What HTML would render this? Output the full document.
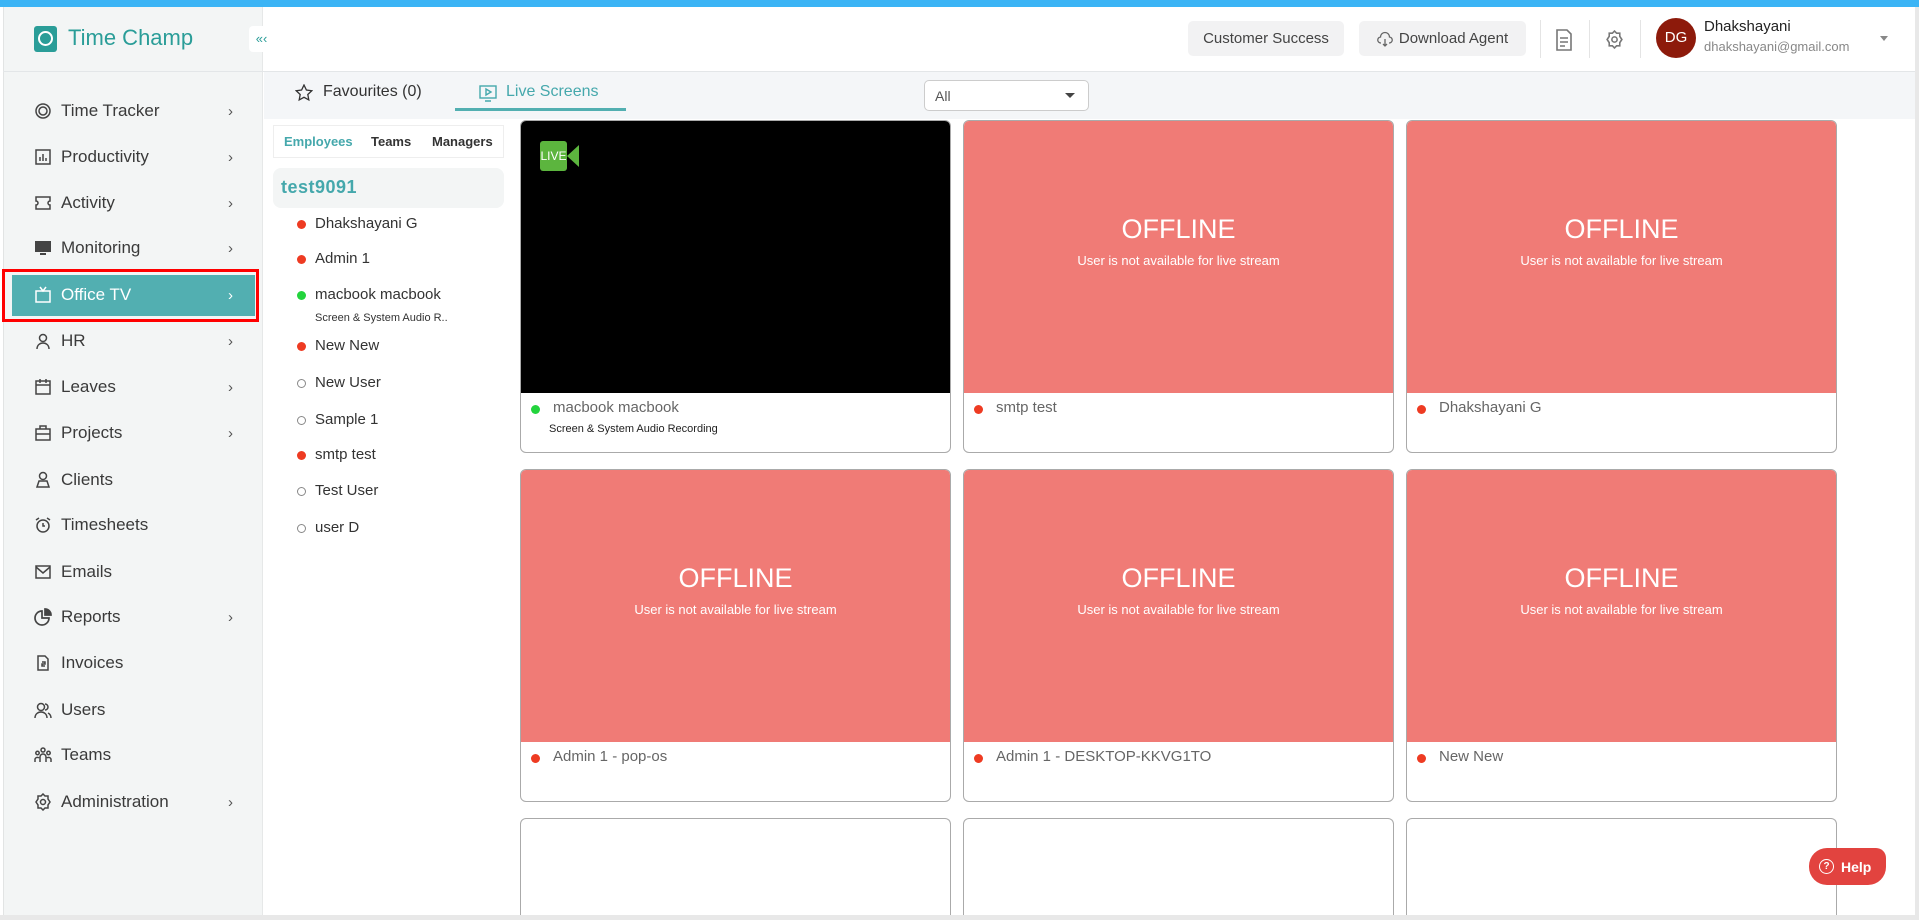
<!DOCTYPE html>
<html><head><meta charset="utf-8"><style>
*{box-sizing:border-box;margin:0;padding:0}
html,body{width:1919px;height:920px;overflow:hidden}
body{background:#fff;font-family:"Liberation Sans",sans-serif;color:#333;position:relative}
.abs{position:absolute}
.top{left:0;top:0;width:1919px;height:7px;background:#3bb4f5}
.side{left:3px;top:7px;width:260px;height:913px;background:#f3f5f5;border-left:1px solid #e2e4e4;border-right:1px solid #e6e8e8}
.hdrline{left:3px;top:71px;width:1912px;height:1px;background:#e3e6e8}
.nav{position:absolute;left:0;width:260px;height:40px;display:flex;align-items:center;font-size:17px;color:#3a3a3a}
.nav svg{position:absolute;left:34px;top:11px}
.nav span{position:absolute;left:61px}
.nav i{position:absolute;left:228px;font-style:normal;font-size:15px;color:#555}
.sub{left:264px;top:72px;width:1651px;height:47px;background:#f4f6f8}
.btn{background:#f2f2f3;border-radius:5px;font-size:15px;color:#444;display:flex;align-items:center;justify-content:center}
.card{position:absolute;width:431px;height:333px;border:1px solid #aaa;border-radius:6px;overflow:hidden;background:#fff}
.card .img{height:272px;background:#f07b76;color:#fff;text-align:center}
.card .img b{display:block;font-weight:normal;font-size:27px;padding-top:93px}
.card .img small{display:block;font-size:13px;margin-top:8px}
.card .nm{position:absolute;left:32px;top:278px;font-size:15px;color:#666}
.card .dt{position:absolute;left:10px;top:284px;width:9px;height:9px;border-radius:50%;background:#ee3b22}
.emp{position:absolute;left:315px;font-size:15px;color:#333}
.ed{position:absolute;left:297px;width:9px;height:9px;border-radius:50%}
</style></head><body>
<div class="abs top"></div>
<div class="abs side"></div>
<div class="abs hdrline"></div>
<div class="abs" style="left:1915px;top:7px;width:4px;height:913px;background:#e8e8e8"></div>
<!-- logo -->
<div class="abs" style="left:34px;top:26px;width:23px;height:26px;background:#2a9d98;border-radius:3px"></div>
<div class="abs" style="left:38px;top:31px;width:15px;height:15px;border:2px solid #fff;border-radius:50%"></div>
<div class="abs" style="left:68px;top:25px;font-size:22px;color:#2a9d98">Time Champ</div>
<div class="abs" style="left:249px;top:26px;width:25px;height:26px;background:#fff;border-radius:4px;color:#2a9d98;font-size:13px;text-align:center;line-height:26px">&laquo;&lsaquo;</div>
<!-- nav -->
<div class="nav" style="top:91px"><svg width="18" height="18" viewBox="0 0 18 18" fill="none" stroke="#444" stroke-width="1.5"><circle cx="9" cy="9" r="7"/><circle cx="9" cy="9" r="4"/></svg><span>Time Tracker</span><i>›</i></div>
<div class="nav" style="top:137px"><svg width="18" height="18" viewBox="0 0 18 18" fill="none" stroke="#444" stroke-width="1.5"><rect x="2" y="2" width="14" height="14"/><path d="M6 13V9M9 13V6M12 13V10"/></svg><span>Productivity</span><i>›</i></div>
<div class="nav" style="top:183px"><svg width="18" height="18" viewBox="0 0 18 18" fill="none" stroke="#444" stroke-width="1.5"><path d="M2 3h14v4a2 2 0 000 4v4H2v-4a2 2 0 000-4z"/></svg><span>Activity</span><i>›</i></div>
<div class="nav" style="top:228px"><svg width="18" height="18" viewBox="0 0 18 18" fill="#444"><rect x="1" y="2" width="16" height="11"/><rect x="6" y="14" width="6" height="2"/></svg><span>Monitoring</span><i>›</i></div>
<div class="abs" style="left:2px;top:269px;width:257px;height:53px;border:3px solid #f00"></div>
<div class="abs" style="left:12px;top:275px;width:243px;height:41px;background:#52afb1"></div>
<div class="nav" style="top:275px;color:#fff"><svg width="18" height="18" viewBox="0 0 18 18" fill="none" stroke="#fff" stroke-width="1.5"><rect x="2" y="5" width="14" height="11"/><path d="M6 1l3 4 3-4"/></svg><span>Office TV</span><i style="color:#fff">›</i></div>
<div class="nav" style="top:321px"><svg width="18" height="18" viewBox="0 0 18 18" fill="none" stroke="#444" stroke-width="1.5"><circle cx="9" cy="6" r="3.5"/><path d="M3 17c0-4 3-6 6-6s6 2 6 6"/></svg><span>HR</span><i>›</i></div>
<div class="nav" style="top:367px"><svg width="18" height="18" viewBox="0 0 18 18" fill="none" stroke="#444" stroke-width="1.5"><rect x="2" y="3" width="14" height="13"/><path d="M2 7h14M6 1v4M12 1v4"/></svg><span>Leaves</span><i>›</i></div>
<div class="nav" style="top:413px"><svg width="18" height="18" viewBox="0 0 18 18" fill="none" stroke="#444" stroke-width="1.5"><rect x="2" y="5" width="14" height="11"/><path d="M6 5V2h6v3M2 10h14"/></svg><span>Projects</span><i>›</i></div>
<div class="nav" style="top:460px"><svg width="18" height="18" viewBox="0 0 18 18" fill="none" stroke="#444" stroke-width="1.5"><circle cx="9" cy="5" r="3.5"/><path d="M3 16l2-6h8l2 6z"/></svg><span>Clients</span></div>
<div class="nav" style="top:505px"><svg width="18" height="18" viewBox="0 0 18 18" fill="none" stroke="#444" stroke-width="1.5"><circle cx="9" cy="10" r="6"/><path d="M9 7v3h2M2 4l3-2M16 4l-3-2"/></svg><span>Timesheets</span></div>
<div class="nav" style="top:552px"><svg width="18" height="18" viewBox="0 0 18 18" fill="none" stroke="#444" stroke-width="1.5"><rect x="2" y="3" width="14" height="12"/><path d="M2 4l7 6 7-6"/></svg><span>Emails</span></div>
<div class="nav" style="top:597px"><svg width="18" height="18" viewBox="0 0 18 18" fill="none" stroke="#444" stroke-width="1.7"><path d="M8 3a7 7 0 107 7H8z"/><path d="M11 1v6h6a6 6 0 00-6-6z" fill="#444"/></svg><span>Reports</span><i>›</i></div>
<div class="nav" style="top:643px"><svg width="18" height="18" viewBox="0 0 18 18" fill="none" stroke="#444" stroke-width="1.5"><path d="M4 2h7l3 3v11H4z"/><path d="M8 8h3v2H8v2h3"/></svg><span>Invoices</span></div>
<div class="nav" style="top:690px"><svg width="18" height="18" viewBox="0 0 18 18" fill="none" stroke="#444" stroke-width="1.5"><circle cx="7" cy="6" r="3.5"/><path d="M1 17c0-4 3-6 6-6s6 2 6 6M11 3a3 3 0 010 6M14 12c2 1 3 3 3 5"/></svg><span>Users</span></div>
<div class="nav" style="top:735px"><svg width="18" height="18" viewBox="0 0 18 18" fill="none" stroke="#444" stroke-width="1.5"><circle cx="9" cy="4" r="2"/><circle cx="3.5" cy="7" r="1.7"/><circle cx="14.5" cy="7" r="1.7"/><path d="M6 16v-5a3 3 0 016 0v5M1 16v-3a2.5 2.5 0 014 -1M17 16v-3a2.5 2.5 0 00-4-1"/></svg><span>Teams</span></div>
<div class="nav" style="top:782px"><svg width="18" height="18" viewBox="0 0 18 18" fill="none" stroke="#444" stroke-width="1.5"><path d="M9 1l2 2h3v3l2 3-2 3v3h-3l-2 2-2-2H4v-3L2 9l2-3V3h3z"/><circle cx="9" cy="9" r="2.5"/></svg><span>Administration</span><i>›</i></div>
<!-- header right -->
<div class="abs btn" style="left:1188px;top:21px;width:156px;height:35px">Customer Success</div>
<div class="abs btn" style="left:1359px;top:21px;width:167px;height:35px"><svg width="16" height="16" viewBox="0 0 16 16" fill="none" stroke="#666" stroke-width="1.3" style="margin-right:6px"><path d="M4 12a3 3 0 01-.5-6A4.5 4.5 0 0112.5 6 3 3 0 0112 12M8 8v7M6 13l2 2 2-2"/></svg>Download Agent</div>
<div class="abs" style="left:1540px;top:20px;width:1px;height:38px;background:#e4e4e4"></div>
<div class="abs" style="left:1589px;top:20px;width:1px;height:38px;background:#e4e4e4"></div>
<div class="abs" style="left:1640px;top:20px;width:1px;height:38px;background:#e4e4e4"></div>
<svg class="abs" style="left:1555px;top:29px" width="18" height="22" viewBox="0 0 18 22" fill="none" stroke="#777" stroke-width="1.6"><path d="M2 1h10l4 4v16H2z"/><path d="M5 9h8M5 13h8M5 17h5"/></svg>
<svg class="abs" style="left:1605px;top:30px" width="19" height="19" viewBox="0 0 18 18" fill="none" stroke="#777" stroke-width="1.5"><path d="M9 1l2 2h3v3l2 3-2 3v3h-3l-2 2-2-2H4v-3L2 9l2-3V3h3z"/><circle cx="9" cy="9" r="2.5"/></svg>
<div class="abs" style="left:1656px;top:18px;width:40px;height:40px;border-radius:50%;background:#8d1a0b;color:#fff;font-size:15px;text-align:center;line-height:40px">DG</div>
<div class="abs" style="left:1704px;top:18px;font-size:15px;color:#222">Dhakshayani</div>
<div class="abs" style="left:1704px;top:39px;font-size:13px;color:#888">dhakshayani@gmail.com</div>
<div class="abs" style="left:1880px;top:36px;width:0;height:0;border-left:4px solid transparent;border-right:4px solid transparent;border-top:5px solid #888"></div>
<!-- sub header -->
<div class="abs sub"></div>
<svg class="abs" style="left:295px;top:84px" width="18" height="18" viewBox="0 0 18 18" fill="none" stroke="#333" stroke-width="1.3"><path d="M9 1l2.4 5 5.4.7-4 3.8 1 5.4L9 13.3 4.2 15.9l1-5.4-4-3.8 5.4-.7z"/></svg>
<div class="abs" style="left:323px;top:83px;font-size:16px;color:#333">Favourites (0)</div>
<svg class="abs" style="left:479px;top:85px" width="18" height="17" viewBox="0 0 18 17" fill="none" stroke="#45a8ac" stroke-width="1.4"><rect x="1" y="1" width="16" height="12"/><path d="M7 4v6l5-3z M6 16h6"/></svg>
<div class="abs" style="left:506px;top:83px;font-size:16px;color:#45a8ac">Live Screens</div>
<div class="abs" style="left:455px;top:108px;width:171px;height:3px;background:#52afb1"></div>
<div class="abs" style="left:924px;top:80px;width:165px;height:31px;background:#fff;border:1px solid #ccc;border-radius:5px;font-size:14px;color:#555;padding:7px 10px">All</div>
<div class="abs" style="left:1065px;top:93px;width:0;height:0;border-left:5px solid transparent;border-right:5px solid transparent;border-top:5px solid #444"></div>
<!-- employee panel -->
<div class="abs" style="left:273px;top:125px;width:231px;height:33px;border:1px solid #eee"></div>
<div class="abs" style="left:284px;top:134px;font-size:13px;color:#45a8ac;font-weight:bold">Employees</div>
<div class="abs" style="left:371px;top:134px;font-size:13px;color:#333;font-weight:bold">Teams</div>
<div class="abs" style="left:432px;top:134px;font-size:13px;color:#333;font-weight:bold">Managers</div>
<div class="abs" style="left:273px;top:168px;width:231px;height:40px;background:#f3f5f5;border-radius:8px"></div>
<div class="abs" style="left:281px;top:177px;font-size:18px;color:#45a8ac;font-weight:bold;letter-spacing:.5px">test9091</div>
<div class="ed" style="top:220px;background:#ee3b22"></div><div class="emp" style="top:215px">Dhakshayani G</div>
<div class="ed" style="top:255px;background:#ee3b22"></div><div class="emp" style="top:250px">Admin 1</div>
<div class="ed" style="top:291px;background:#23d43d"></div><div class="emp" style="top:286px">macbook macbook</div>
<div class="abs" style="left:315px;top:312px;font-size:11px;color:#333">Screen &amp; System Audio R..</div>
<div class="ed" style="top:342px;background:#ee3b22"></div><div class="emp" style="top:337px">New New</div>
<div class="ed" style="top:379px;border:1px solid #888"></div><div class="emp" style="top:374px">New User</div>
<div class="ed" style="top:416px;border:1px solid #888"></div><div class="emp" style="top:411px">Sample 1</div>
<div class="ed" style="top:451px;background:#ee3b22"></div><div class="emp" style="top:446px">smtp test</div>
<div class="ed" style="top:487px;border:1px solid #888"></div><div class="emp" style="top:482px">Test User</div>
<div class="ed" style="top:524px;border:1px solid #888"></div><div class="emp" style="top:519px">user D</div>
<!-- cards -->
<div class="card" style="left:520px;top:120px"><div class="img" style="background:#000"></div><div class="dt" style="background:#23d43d"></div><div class="nm">macbook macbook</div><div class="abs" style="left:28px;top:302px;font-size:11px;color:#222">Screen &amp; System Audio Recording</div>
<div class="abs" style="left:19px;top:20px;width:27px;height:30px;background:#5cb53e;border-radius:3px;color:#fff;font-size:12px;line-height:30px;text-align:center">LIVE</div><div class="abs" style="left:46px;top:24px;width:0;height:0;border-top:11px solid transparent;border-bottom:11px solid transparent;border-right:12px solid #5cb53e"></div></div>
<div class="card" style="left:963px;top:120px"><div class="img"><b>OFFLINE</b><small>User is not available for live stream</small></div><div class="dt"></div><div class="nm">smtp test</div></div>
<div class="card" style="left:1406px;top:120px"><div class="img"><b>OFFLINE</b><small>User is not available for live stream</small></div><div class="dt"></div><div class="nm">Dhakshayani G</div></div>
<div class="card" style="left:520px;top:469px"><div class="img"><b>OFFLINE</b><small>User is not available for live stream</small></div><div class="dt"></div><div class="nm">Admin 1 - pop-os</div></div>
<div class="card" style="left:963px;top:469px"><div class="img"><b>OFFLINE</b><small>User is not available for live stream</small></div><div class="dt"></div><div class="nm">Admin 1 - DESKTOP-KKVG1TO</div></div>
<div class="card" style="left:1406px;top:469px"><div class="img"><b>OFFLINE</b><small>User is not available for live stream</small></div><div class="dt"></div><div class="nm">New New</div></div>
<div class="card" style="left:520px;top:818px;height:100px;border-bottom:none;border-radius:6px 6px 0 0"></div>
<div class="card" style="left:963px;top:818px;height:100px;border-bottom:none;border-radius:6px 6px 0 0"></div>
<div class="card" style="left:1406px;top:818px;height:100px;border-bottom:none;border-radius:6px 6px 0 0"></div>
<div class="abs" style="left:0;top:915px;width:1919px;height:5px;background:#e8e8e8"></div>
<div class="abs" style="left:1809px;top:848px;width:77px;height:37px;background:#e2433f;border-radius:18px 10px 18px 18px;color:#fff;font-weight:bold;font-size:14px;display:flex;align-items:center;padding-left:10px"><span style="display:inline-block;width:15px;height:15px;border:1.5px solid #fff;border-radius:50%;font-size:10px;text-align:center;line-height:13px;margin-right:7px">?</span>Help</div>
</body></html>
